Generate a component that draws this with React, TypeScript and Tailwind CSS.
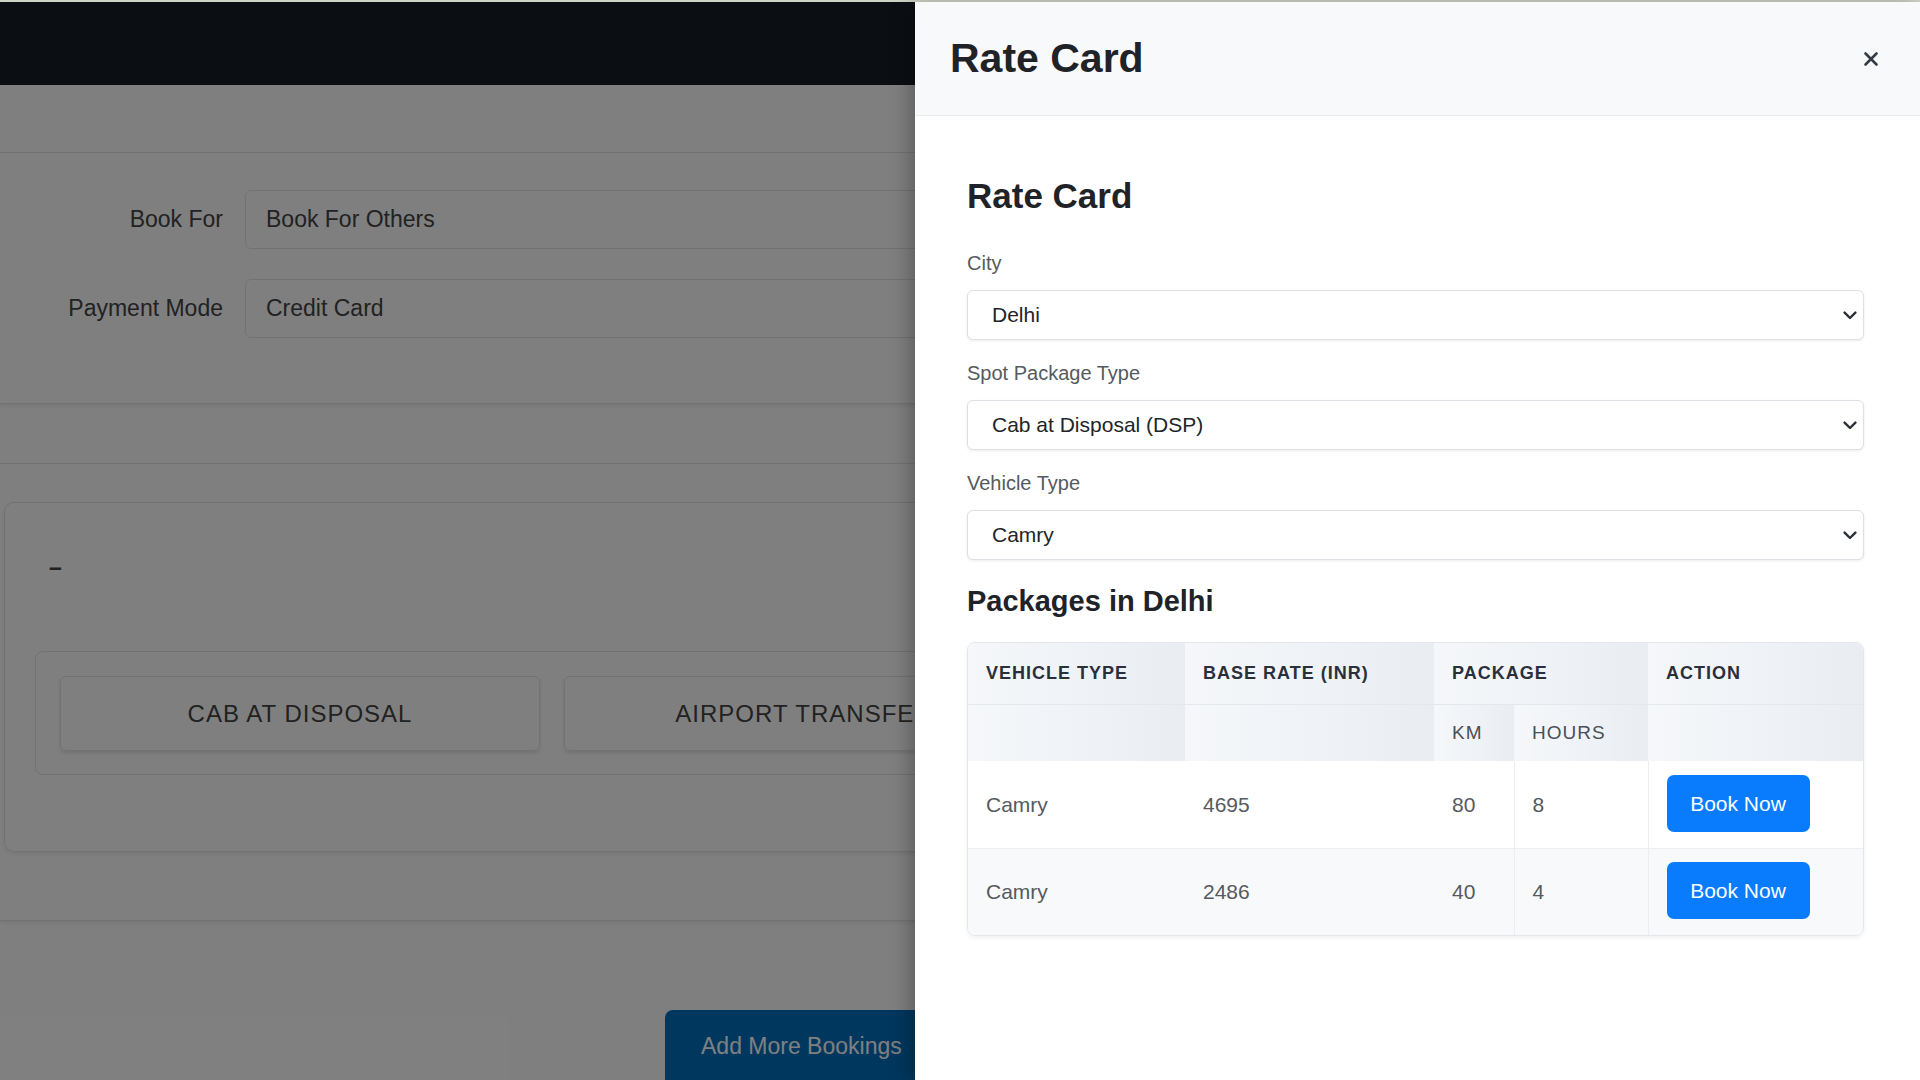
import React from "react";

function Chevron() {
  return (
    <svg width="14" height="9" viewBox="0 0 14 9" fill="none">
      <path d="M1.6 1.6 L7 7 L12.4 1.6" stroke="#2b3036" strokeWidth="2.4" strokeLinecap="round" strokeLinejoin="round" />
    </svg>
  );
}

function CloseIcon() {
  return (
    <svg width="16" height="16" viewBox="0 0 16 16" fill="none">
      <path d="M2.5 2.5 L13.5 13.5 M13.5 2.5 L2.5 13.5" stroke="#353b44" strokeWidth="2.6" strokeLinecap="round" />
    </svg>
  );
}

function FakeSelect({ value }: { value: string }) {
  return (
    <div className="flex h-[50px] w-[897px] items-center justify-between rounded-[6px] border border-[#dcdfe4] bg-white pl-[24px] pr-[6px] text-[21px] text-[#212529] shadow-[0_1px_3px_rgba(0,0,0,0.08)]">
      <span>{value}</span>
      <Chevron />
    </div>
  );
}

function Row({ label, value }: { label: string; value: string }) {
  return (
    <div className="flex items-center">
      <div className="w-[223px] text-right">{label}</div>
      <div className="ml-[22px] flex h-[59px] w-[1500px] items-center rounded-[6px] border border-[#e4e4e4] px-[20px]">
        {value}
      </div>
    </div>
  );
}

const thMain =
  "bg-linear-to-r from-[#f5f7fa] to-[#e9edf2] text-left align-middle pl-[18px] text-[18px] font-bold tracking-[1px] text-[#2a303a]";
const thSub =
  "bg-linear-to-r from-[#f5f7fa] to-[#e9edf2] text-left align-middle pl-[18px] text-[19px] font-normal tracking-[1px] text-[#4a4f57] border-t border-[#e4e8ed]";
const td = "pl-[18px] align-middle text-[21px] text-[#555a60]";

function BookNow() {
  return (
    <button className="h-[57px] w-[143px] rounded-[7px] bg-[#087cfc] text-[21px] text-white">Book Now</button>
  );
}

export default function App() {
  return (
    <div className="h-[1080px] w-[1920px] overflow-hidden bg-white font-['Liberation_Sans',Arial,Helvetica,sans-serif]">
      <div className="h-[2px] bg-[#cfd4c6]" />
      <div className="relative h-[1078px]">
        {/* underlying page */}
        <div className="text-[23px] text-[#444]">
          <div className="h-[83px] bg-[#161c26]" />
          <div className="mt-[67px] flex h-[252px] flex-col gap-[30px] border-y border-[#e4e4e4] pt-[37px] shadow-[0_2px_4px_rgba(0,0,0,0.08)]">
            <Row label="Book For" value="Book For Others" />
            <Row label="Payment Mode" value="Credit Card" />
          </div>
          <div className="mt-[59px] h-[458px] border-y border-[#e4e4e4] pl-[4px] pt-[38px] shadow-[0_2px_4px_rgba(0,0,0,0.08)]">
            <div className="h-[350px] w-[1600px] rounded-[10px] border border-[#e4e4e4] pl-[30px] pt-[50px] shadow-[0_2px_4px_rgba(0,0,0,0.08)]">
              <div className="ml-[14px] h-[28px] font-bold leading-[28px]">–</div>
              <div className="mt-[70px] flex h-[124px] w-[1500px] gap-[24px] rounded-[8px] border border-[#e4e4e4] p-[24px]">
                <div className="flex h-[75px] w-[480px] items-center justify-center rounded-[6px] border border-[#e4e4e4] text-[24px] tracking-[1px] shadow-[0_2px_4px_rgba(0,0,0,0.12)]">
                  CAB AT DISPOSAL
                </div>
                <div className="flex h-[75px] w-[480px] items-center justify-center rounded-[6px] border border-[#e4e4e4] text-[24px] tracking-[1px] shadow-[0_2px_4px_rgba(0,0,0,0.12)]">
                  AIRPORT TRANSFER
                </div>
              </div>
            </div>
          </div>
          <div className="ml-[665px] mt-[89px] h-[90px] w-[420px] rounded-t-[8px] bg-[#006ebc] pl-[36px] pt-[22px] leading-[28px] text-white">
            Add More Bookings
          </div>
        </div>

        {/* backdrop */}
        <div className="absolute inset-0 bg-black/50" />

        {/* drawer */}
        <div className="absolute bottom-0 right-0 top-0 w-[1005px] bg-white shadow-[-6px_0_18px_rgba(0,0,0,0.25)]">
          <div className="flex h-[114px] items-center justify-between border-b border-[#eaedf0] bg-[#f8f9fa] pl-[35px] pr-[41px]">
            <h1 className="text-[41px] font-bold text-[#1f2328]">Rate Card</h1>
            <CloseIcon />
          </div>
          <div className="flex flex-col pl-[52px] pt-[59px]">
            <h2 className="h-[42px] text-[35px] font-bold leading-[42px] text-[#1f2328]">Rate Card</h2>
            <label className="mb-[15px] mt-[34px] h-[24px] text-[20px] leading-[24px] text-[#555a60]">City</label>
            <FakeSelect value="Delhi" />
            <label className="mb-[15px] mt-[21px] h-[24px] text-[20px] leading-[24px] text-[#555a60]">Spot Package Type</label>
            <FakeSelect value="Cab at Disposal (DSP)" />
            <label className="mb-[15px] mt-[21px] h-[24px] text-[20px] leading-[24px] text-[#555a60]">Vehicle Type</label>
            <FakeSelect value="Camry" />
            <h3 className="mt-[24px] h-[34px] text-[29px] font-bold leading-[34px] text-[#1f2328]">Packages in Delhi</h3>
            <div className="mt-[24px] w-[897px] overflow-hidden rounded-[8px] border border-[#e3e7ec] shadow-[0_2px_4px_rgba(0,0,0,0.06)]">
              <table className="w-full table-fixed border-collapse">
                <colgroup>
                  <col className="w-[217px]" />
                  <col className="w-[249px]" />
                  <col className="w-[80px]" />
                  <col className="w-[134px]" />
                  <col className="w-[215px]" />
                </colgroup>
                <thead>
                  <tr className="h-[61px]">
                    <th className={thMain}>VEHICLE TYPE</th>
                    <th className={thMain}>BASE RATE (INR)</th>
                    <th className={thMain} colSpan={2}>PACKAGE</th>
                    <th className={thMain}>ACTION</th>
                  </tr>
                  <tr className="h-[57px]">
                    <th className={thSub}></th>
                    <th className={thSub}></th>
                    <th className={thSub}>KM</th>
                    <th className={thSub}>HOURS</th>
                    <th className={thSub}></th>
                  </tr>
                </thead>
                <tbody>
                  <tr className="h-[87px] bg-white">
                    <td className={td}>Camry</td>
                    <td className={td}>4695</td>
                    <td className={td}>80</td>
                    <td className={td + " border-l border-[#eceef1]"}>8</td>
                    <td className={"pl-[18px] pb-[2px] align-middle border-l border-[#eceef1]"}>
                      <BookNow />
                    </td>
                  </tr>
                  <tr className="h-[87px] border-t border-[#eceef1] bg-[#f8f9fb]">
                    <td className={td}>Camry</td>
                    <td className={td}>2486</td>
                    <td className={td}>40</td>
                    <td className={td + " border-l border-[#eceef1]"}>4</td>
                    <td className={"pl-[18px] pb-[2px] align-middle border-l border-[#eceef1]"}>
                      <BookNow />
                    </td>
                  </tr>
                </tbody>
              </table>
            </div>
          </div>
        </div>
      </div>
    </div>
  );
}
